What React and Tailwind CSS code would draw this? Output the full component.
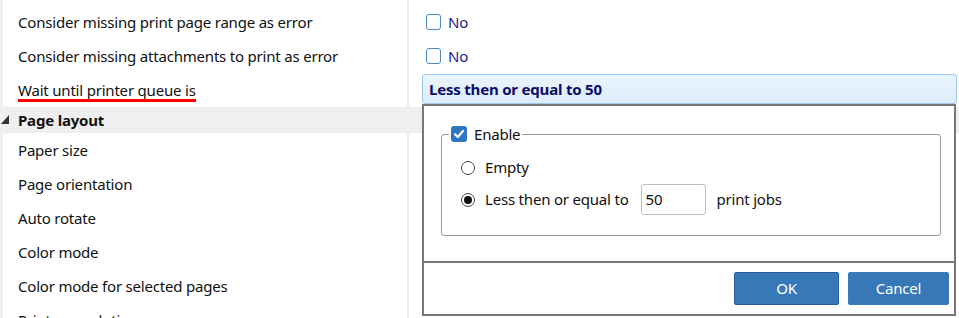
import React from "react";

const font = { fontFamily: '"Noto Sans", "Open Sans", sans-serif' };

function Box({ checked }) {
  if (checked) {
    return (
      <span className="flex h-[16px] w-[16px] items-center justify-center rounded-[3px] bg-[#2f77c2]">
        <svg width="12" height="12" viewBox="0 0 12 12">
          <path d="M2 6.2 L4.8 9 L10 3" fill="none" stroke="#fff" strokeWidth="2.2" strokeLinecap="round" strokeLinejoin="round" />
        </svg>
      </span>
    );
  }
  return <span className="block h-[16px] w-[15px] rounded-[3px] border-[1.5px] border-[#4a86c4] bg-white" />;
}

function Radio({ on }) {
  return (
    <span className="flex h-[14px] w-[14px] items-center justify-center rounded-full border border-[#444] bg-white">
      {on && <span className="block h-[8px] w-[8px] rounded-full bg-[#111]" />}
    </span>
  );
}

function Row({ name, children }) {
  return (
    <div className="flex h-[34px]">
      <div className="flex w-[406px] items-center border-r-2 border-[#ececec] pl-[15px]">
        <span>{name}</span>
      </div>
      <div className="flex flex-1 items-center">{children}</div>
    </div>
  );
}

export default function App() {
  return (
    <div className="relative h-[318px] w-[959px] overflow-hidden bg-white text-[15px] tracking-[-0.2px] text-[#111]" style={font}>
      <div className="border-l-[3px] border-[#f0f0f0]">
        <div className="h-[5px] w-[406px] border-r-2 border-[#ececec]" />
        <Row name="Consider missing print page range as error">
          <div className="ml-[17px] flex items-center gap-[7px] text-[#1c1c8a]">
            <Box />
            <span>No</span>
          </div>
        </Row>
        <Row name="Consider missing attachments to print as error">
          <div className="ml-[17px] flex items-center gap-[7px] text-[#1c1c8a]">
            <Box />
            <span>No</span>
          </div>
        </Row>
        <div className="flex h-[34px]">
          <div className="flex w-[406px] items-center border-r-2 border-[#ececec] pl-[15px]">
            <span className="relative">
              Wait until printer queue is
              <span className="absolute left-0 right-0 top-[20px] block h-[3px] bg-[#ff0000]" />
            </span>
          </div>
          <div className="flex flex-1 items-start pt-px">
            <div className="ml-[13px] mr-[2px] flex h-[30px] flex-1 items-center rounded-[3px] border border-[#9ec8f0] bg-gradient-to-b from-[#eaf4fe] to-[#dcecfb] pl-[6px] font-bold text-[#0b0b66]">
              Less then or equal to 50
            </div>
          </div>
        </div>
        <div className="-ml-[3px] flex h-[26px] items-center bg-[#efefef] font-bold">
          <svg width="18" height="26" viewBox="0 0 18 26" className="shrink-0">
            <polygon points="1,17 9,17 9,8" fill="#333" />
          </svg>
          <span>Page layout</span>
        </div>
        <Row name="Paper size" />
        <Row name="Page orientation" />
        <Row name="Auto rotate" />
        <Row name="Color mode" />
        <Row name="Color mode for selected pages" />
        <Row name="Printer resolution" />
      </div>

      <div className="absolute left-[422px] top-[104px] flex h-[212px] w-[534px] flex-col border-2 border-[#777] bg-white">
        <div className="h-[157px] border-b-2 border-[#777] pl-[17px] pr-[13px] pt-[17px]">
          <fieldset className="rounded-[3px] border border-[#9a9a9a] pb-[19px] pl-[19px]">
            <legend className="-ml-[12px] flex items-center gap-[7px] px-[2px]">
              <Box checked />
              <span>Enable</span>
            </legend>
            <div className="pt-[6px]">
              <div className="flex h-[32px] items-center gap-[10px]">
                <Radio />
                <span>Empty</span>
              </div>
              <div className="flex h-[32px] items-center gap-[10px]">
                <Radio on />
                <span>Less then or equal to</span>
                <div className="ml-[2px] flex h-[31px] w-[65px] items-center rounded-[3px] border border-[#bdbdbd] pl-[4px]">50</div>
                <span className="ml-[1px]">print jobs</span>
              </div>
            </div>
          </fieldset>
        </div>
        <div className="flex flex-1 items-start justify-end gap-[9px] pr-[5px] pt-[9px]">
          <button className="h-[33px] w-[105px] rounded-[2px] border border-[#2a5d93] bg-[#3778b8] text-white">OK</button>
          <button className="h-[33px] w-[101px] rounded-[2px] border border-[#3a7bbb] bg-[#3778b8] text-white">Cancel</button>
        </div>
      </div>
    </div>
  );
}
